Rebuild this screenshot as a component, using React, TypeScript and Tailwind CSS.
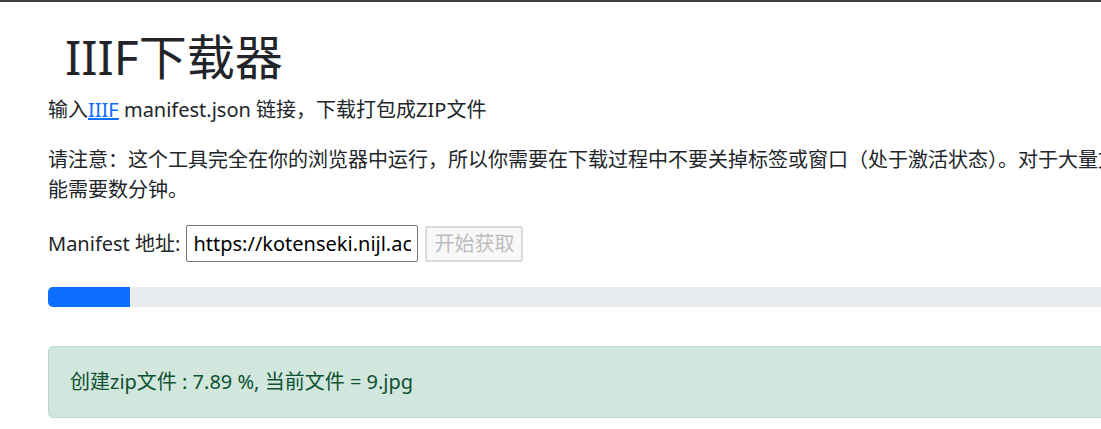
import React from 'react';

const App: React.FC = () => {
  return (
    <div
      className="min-h-screen w-full overflow-hidden bg-white border-t-2 border-[#3c3c3c] text-[#212529] text-[20px] leading-[30px]"
      style={{ fontFamily: '"Noto Sans", "Noto Sans CJK SC", sans-serif' }}
    >
      <div className="w-[1180px] pl-[48px] pt-[25px]">
        <h1 className="pl-[17px] text-[48px] leading-[60px] font-normal">IIIF下载器</h1>
        <p className="mt-[8px]">
          输入<a href="#" className="text-[#0d6efd] underline">IIIF</a> manifest.json 链接，下载打包成ZIP文件
        </p>
        <p className="mt-[20px]">
          请注意：这个工具完全在你的浏览器中运行，所以你需要在下载过程中不要关掉标签或窗口（处于激活状态）。对于大量文件，可能需要数分钟。
        </p>

        <div className="mt-[20px] flex items-center">
          <label className="mr-[6px]">Manifest 地址:</label>
          <input
            type="text"
            readOnly
            value="https://kotenseki.nijl.ac.jp/biblio/100249396/manifest"
            className="w-[232px] h-[37px] px-[6px] border border-[#767676] rounded-[2px] text-black text-[20px] outline-none"
          />
          <button
            disabled
            className="ml-[7px] w-[98px] h-[36px] border-2 border-[#dadada] bg-[#f8f8f8] rounded-[2px] text-[#bdbdbd] text-[20px] leading-none"
          >
            开始获取
          </button>
        </div>

        <div className="mt-[25px] h-[20px] rounded-[5px] bg-[#e9ecef] overflow-hidden flex">
          <div className="h-full bg-[#0d6efd]" style={{ width: 82 }} />
        </div>

        <div className="mt-[39px] rounded-[5px] border border-[#badbcc] bg-[#d1e7dd] text-[#0f5132] px-[21px] py-[20px]">
          创建zip文件 : 7.89 %, 当前文件 = 9.jpg
        </div>
      </div>
    </div>
  );
};

export default App;
